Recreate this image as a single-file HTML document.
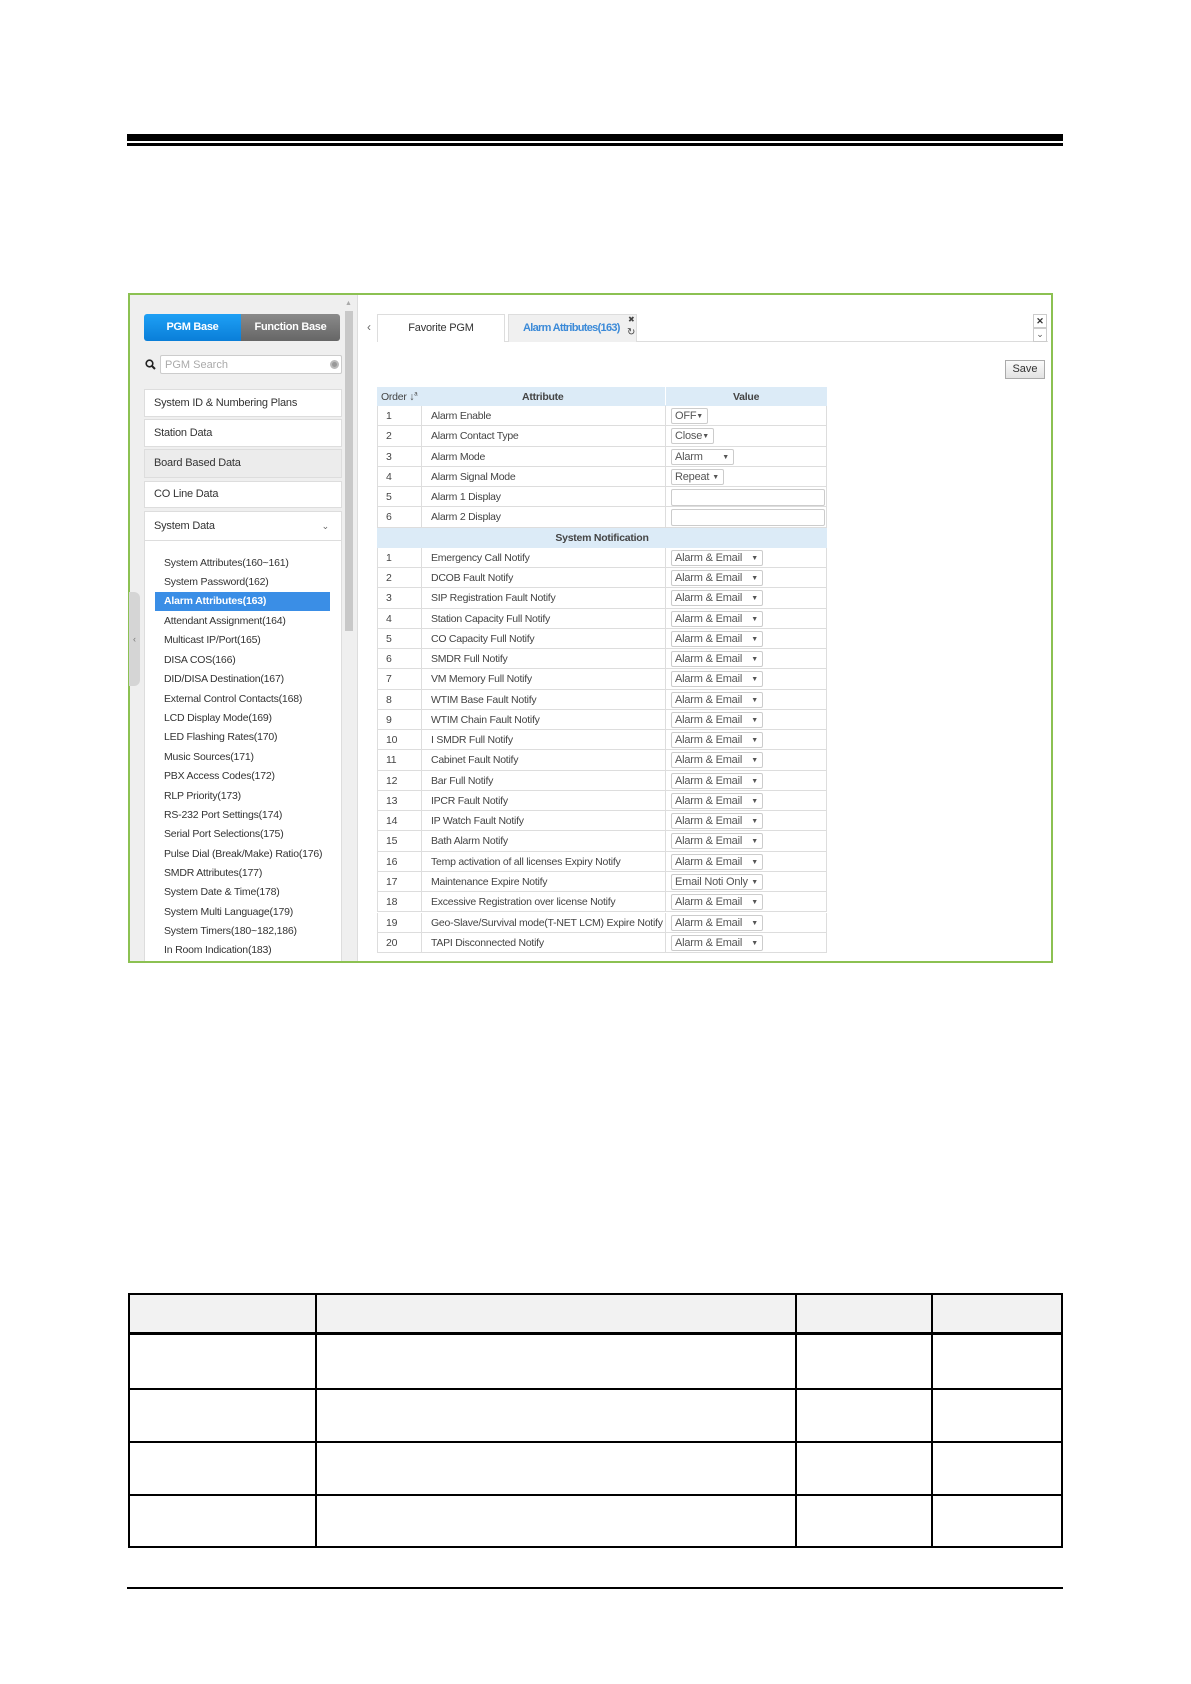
<!DOCTYPE html>
<html><head><meta charset="utf-8"><style>
*{box-sizing:border-box;margin:0;padding:0}
body{width:1191px;height:1684px;background:#fff;position:relative;font-family:"Liberation Sans",Arial,sans-serif;color:#333;overflow:hidden}
.a{position:absolute}
.frame{left:128px;top:293px;width:925px;height:670px;border:2px solid #8cc152;background:#fff}
.side{left:130px;top:295px;width:227px;height:666px;background:#efefef}
.btn{top:314px;height:27px;color:#fff;font-size:11px;font-weight:bold;text-align:center;line-height:27px;letter-spacing:-0.3px}
.mi{left:144px;width:198px;background:#fff;border:1px solid #ddd;font-size:11px;padding-left:9px;color:#333;letter-spacing:-0.2px}
.sub{left:144px;top:541px;width:198px;height:420px;background:#fff;border-left:1px solid #ddd;border-right:1px solid #ddd}
.si{left:164px;font-size:10.5px;color:#333;height:19px;line-height:19px;white-space:nowrap;letter-spacing:-0.2px}
.row{position:absolute;left:377px;width:450px;height:20.26px;border-bottom:1px solid #ddd;border-left:1px solid #ddd;border-right:1px solid #ddd;font-size:10.5px;color:#444;background:#fff;letter-spacing:-0.25px}
.row .c1{position:absolute;left:8px;top:4px}
.row .c2{position:absolute;left:53px;top:4px;white-space:nowrap}
.row .c3{position:absolute;left:0;top:0;width:44px;height:100%;border-right:1px solid #ddd}
.row .c4{position:absolute;left:287px;top:0;height:100%;border-left:1px solid #ddd}
.sel{position:absolute;left:293px;top:2px;height:16px;border:1px solid #ccc;border-radius:2px;font-size:11px;line-height:14px;padding-left:3px;color:#555;background:#fff;white-space:nowrap;letter-spacing:-0.2px}
.sel i{font-style:normal;font-size:7px;position:absolute;right:4px;top:1px}
.hd{background:#dcebf7}
.bl{background:#000}
.tv{position:absolute;width:2px;background:#000}
</style></head><body>
<div class="a bl" style="left:127px;top:134px;width:936px;height:7px"></div>
<div class="a bl" style="left:127px;top:143px;width:936px;height:3px"></div>

<div class="a frame"></div>
<div class="a side"></div>
<div class="a" style="left:357px;top:295px;width:1px;height:666px;background:#ddd"></div>
<div class="a" style="left:345px;top:300px;width:8px;height:8px;font-size:7px;color:#aaa">▲</div>
<div class="a" style="left:345px;top:311px;width:8px;height:320px;background:#c8c8c8"></div>
<div class="a" style="left:129px;top:592px;width:11px;height:94px;background:#d5d5d5;border-radius:0 6px 6px 0;font-size:9px;color:#777;line-height:94px;text-align:center">‹</div>

<div class="a btn" style="left:144px;width:97px;background:linear-gradient(#1ea0f5,#0a7ed8);border-radius:3px 0 0 3px">PGM Base</div>
<div class="a btn" style="left:241px;width:99px;background:linear-gradient(#8a8a8a,#666);border-radius:0 3px 3px 0">Function Base</div>
<svg class="a" style="left:145px;top:359px" width="11" height="11"><circle cx="4.5" cy="4.5" r="3.3" stroke="#222" stroke-width="1.6" fill="none"/><line x1="7" y1="7" x2="10" y2="10" stroke="#222" stroke-width="2"/></svg>
<div class="a" style="left:160px;top:355px;width:182px;height:19px;background:#fff;border:1px solid #ccc;border-radius:2px;font-size:11px;color:#aaa;padding:3px 0 0 4px">PGM Search</div>
<div class="a" style="left:330px;top:360px;width:9px;height:9px;border-radius:50%;background:#999;border:2px solid #bbb"></div>

<div class="a mi" style="top:389px;height:28px;line-height:26px">System ID &amp; Numbering Plans</div>
<div class="a mi" style="top:419px;height:28px;line-height:26px">Station Data</div>
<div class="a mi" style="top:449px;height:29px;line-height:27px;background:#ececec">Board Based Data</div>
<div class="a mi" style="top:481px;height:27px;line-height:25px">CO Line Data</div>
<div class="a mi" style="top:511px;height:30px;line-height:28px">System Data<span style="position:absolute;right:12px;font-size:9px;color:#666">⌄</span></div>
<div class="a sub"></div>
<div class="a" style="left:155px;top:592px;width:175px;height:19px;background:#3a8ee6"></div>
<div class="a si" style="top:554px">System Attributes(160~161)</div>
<div class="a si" style="top:573px">System Password(162)</div>
<div class="a si" style="top:592px;color:#fff;font-weight:bold">Alarm Attributes(163)</div>
<div class="a si" style="top:612px">Attendant Assignment(164)</div>
<div class="a si" style="top:631px">Multicast IP/Port(165)</div>
<div class="a si" style="top:651px">DISA COS(166)</div>
<div class="a si" style="top:670px">DID/DISA Destination(167)</div>
<div class="a si" style="top:690px">External Control Contacts(168)</div>
<div class="a si" style="top:709px">LCD Display Mode(169)</div>
<div class="a si" style="top:728px">LED Flashing Rates(170)</div>
<div class="a si" style="top:748px">Music Sources(171)</div>
<div class="a si" style="top:767px">PBX Access Codes(172)</div>
<div class="a si" style="top:787px">RLP Priority(173)</div>
<div class="a si" style="top:806px">RS-232 Port Settings(174)</div>
<div class="a si" style="top:825px">Serial Port Selections(175)</div>
<div class="a si" style="top:845px">Pulse Dial (Break/Make) Ratio(176)</div>
<div class="a si" style="top:864px">SMDR Attributes(177)</div>
<div class="a si" style="top:883px">System Date &amp; Time(178)</div>
<div class="a si" style="top:903px">System Multi Language(179)</div>
<div class="a si" style="top:922px">System Timers(180~182,186)</div>
<div class="a si" style="top:941px">In Room Indication(183)</div>

<div class="a" style="left:367px;top:320px;font-size:12px;color:#666">‹</div>
<div class="a" style="left:377px;top:341px;width:671px;height:1px;background:#ddd"></div>
<div class="a" style="left:377px;top:314px;width:128px;height:28px;background:#fff;border:1px solid #ddd;border-bottom:none;font-size:11px;text-align:center;line-height:27px;color:#333;letter-spacing:-0.2px">Favorite PGM</div>
<div class="a" style="left:508px;top:314px;width:129px;height:28px;background:#f0f0f0;border:1px solid #ddd;border-bottom:none;font-size:11px;font-weight:bold;line-height:27px;color:#3b8ad8;padding-left:14px;letter-spacing:-0.7px;white-space:nowrap">Alarm Attributes(163)</div>
<div class="a" style="left:628px;top:315px;font-size:8px;color:#444">✖</div>
<div class="a" style="left:627px;top:327px;font-size:10px;color:#444">↻</div>
<div class="a" style="left:1033px;top:314px;width:14px;height:14px;border:1px solid #ccc;font-size:9px;text-align:center;line-height:12px;color:#333;font-weight:bold">✕</div>
<div class="a" style="left:1033px;top:328px;width:14px;height:14px;border:1px solid #ccc;font-size:9px;text-align:center;line-height:10px;color:#555">⌄</div>
<div class="a" style="left:1005px;top:360px;width:40px;height:19px;border:1px solid #aaa;background:linear-gradient(#fafafa,#e2e2e2);font-size:11px;text-align:center;line-height:17px;color:#333">Save</div>

<div class="row hd" style="top:387px;height:19px;border-color:#dcebf7;background:#dcebf7">
<span style="position:absolute;left:3px;top:4px">Order ↓<sup style="font-size:6px">a</sup></span>
<span style="position:absolute;left:144px;top:4px;font-weight:bold">Attribute</span>
<span class="c4" style="border-color:#fff"></span>
<span style="position:absolute;left:355px;top:4px;font-weight:bold">Value</span>
</div>
<div id="rows"></div>

<div class="a" style="left:128px;top:1293px;width:935px;height:41px;background:#f2f2f2"></div>
<div class="a bl" style="left:128px;top:1293px;width:935px;height:2px"></div>
<div class="a bl" style="left:128px;top:1332px;width:935px;height:3px"></div>
<div class="a bl" style="left:128px;top:1388px;width:935px;height:2px"></div>
<div class="a bl" style="left:128px;top:1441px;width:935px;height:2px"></div>
<div class="a bl" style="left:128px;top:1494px;width:935px;height:2px"></div>
<div class="a bl" style="left:128px;top:1546px;width:935px;height:2px"></div>
<div class="tv" style="left:128px;top:1293px;height:255px"></div>
<div class="tv" style="left:315px;top:1293px;height:255px"></div>
<div class="tv" style="left:795px;top:1293px;height:255px"></div>
<div class="tv" style="left:931px;top:1293px;height:255px"></div>
<div class="tv" style="left:1061px;top:1293px;height:255px"></div>
<div class="a bl" style="left:127px;top:1587px;width:936px;height:2px"></div>

<script>
var r=[["1","Alarm Enable","OFF",37],["2","Alarm Contact Type","Close",43],["3","Alarm Mode","Alarm",63],["4","Alarm Signal Mode","Repeat",53],["5","Alarm 1 Display","",""],["6","Alarm 2 Display","",""],["H"]];
var n=["Emergency Call Notify","DCOB Fault Notify","SIP Registration Fault Notify","Station Capacity Full Notify","CO Capacity Full Notify","SMDR Full Notify","VM Memory Full Notify","WTIM Base Fault Notify","WTIM Chain Fault Notify","I SMDR Full Notify","Cabinet Fault Notify","Bar Full Notify","IPCR Fault Notify","IP Watch Fault Notify","Bath Alarm Notify","Temp activation of all licenses Expiry Notify","Maintenance Expire Notify","Excessive Registration over license Notify","Geo-Slave/Survival mode(T-NET LCM) Expire Notify","TAPI Disconnected Notify"];
n.forEach(function(t,i){r.push([""+(i+1),t,i==16?"Email Noti Only":"Alarm &amp; Email",92]);});
var h="";r.forEach(function(x,i){var top=(406+i*20.26).toFixed(2);
if(x[0]=="H"){h+='<div class="row hd" style="top:'+top+'px;border-color:#dcebf7"><span style="position:absolute;left:0;width:100%;text-align:center;top:4px;font-weight:bold">System Notification</span></div>';return;}
var v=x[2]==""?'<span class="sel" style="width:154px;height:17px"></span>':'<span class="sel" style="width:'+x[3]+'px">'+x[2]+'<i>▼</i></span>';
h+='<div class="row" style="top:'+top+'px"><span class="c3"></span><span class="c4"></span><span class="c1">'+x[0]+'</span><span class="c2">'+x[1]+'</span>'+v+'</div>';});
document.getElementById("rows").innerHTML=h;
</script>
</body></html>
